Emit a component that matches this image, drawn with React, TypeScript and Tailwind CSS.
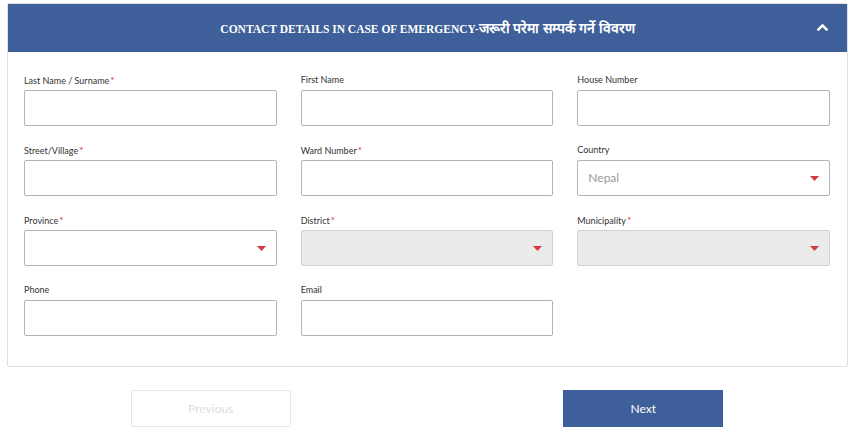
import { ChevronUp } from "lucide-react";

type Field = {
  label: string;
  required?: boolean;
  kind?: "text" | "select";
  disabled?: boolean;
  value?: string;
};

const rows: (Field | null)[][] = [
  [
    { label: "Last Name / Surname", required: true },
    { label: "First Name" },
    { label: "House Number" },
  ],
  [
    { label: "Street/Village", required: true },
    { label: "Ward Number", required: true },
    { label: "Country", kind: "select", value: "Nepal" },
  ],
  [
    { label: "Province", required: true, kind: "select" },
    { label: "District", required: true, kind: "select", disabled: true },
    { label: "Municipality", required: true, kind: "select", disabled: true },
  ],
  [{ label: "Phone" }, { label: "Email" }, null],
];

function Caret() {
  return (
    <svg width="9" height="5" viewBox="0 0 9 5" className="shrink-0">
      <path d="M0 0h9L4.5 5z" fill="#d23a3e" />
    </svg>
  );
}

function FormField({ field }: { field: Field }) {
  return (
    <div className="flex flex-col">
      <label className="h-[14px] text-[9px] leading-[14px] text-[#333] font-['Lato',sans-serif]">
        {field.label}
        {field.required && <span className="ml-[1px] text-[10px] text-[#d2313a]">*</span>}
      </label>
      <div
        className={`mt-[3px] flex h-[36px] items-center justify-between rounded-[2px] border border-[#b4b4b4] px-[10px] ${
          field.disabled ? "bg-[#ebebeb] border-[#cfcfcf]" : "bg-white"
        }`}
      >
        <span className="text-[12px] text-[#999] font-['Lato',sans-serif]">{field.value ?? ""}</span>
        {field.kind === "select" && <Caret />}
      </div>
    </div>
  );
}

export default function App() {
  return (
    <div className="w-[855px] h-[448px] bg-white pt-[3px] font-['Lato',sans-serif]">
      <div className="mx-[7px] rounded-[2px] border border-[#e0e0e0] bg-white">
        <div className="relative flex h-[48px] items-center justify-center bg-[#3e5f99]">
          <h2 className="text-[11.5px] font-bold text-white font-['Liberation_Serif',serif]">
            CONTACT DETAILS IN CASE OF EMERGENCY-
            <span className="text-[14px]">जरूरी परेमा सम्पर्क गर्ने विवरण</span>
          </h2>
          <ChevronUp className="absolute right-[16px] top-[15px] text-white" size={17} strokeWidth={3.5} />
        </div>
        <div className="flex flex-col gap-[17px] pl-[16px] pr-[17px] pt-[21px] pb-[30px]">
          {rows.map((row, i) => (
            <div key={i} className="grid grid-cols-3 gap-x-[24px]">
              {row.map((f, j) => (f ? <FormField key={j} field={f} /> : <div key={j} />))}
            </div>
          ))}
        </div>
      </div>
      <div className="mt-[23px] grid grid-cols-2">
        <div className="flex justify-center pr-[6px]">
          <button className="h-[37px] w-[160px] rounded-[2px] border border-[#e6e6e6] bg-white text-[12px] text-[#dedede]">
            Previous
          </button>
        </div>
        <div className="flex justify-center pl-[4px]">
          <button className="h-[37px] w-[160px] bg-[#3e5f99] text-[12px] text-white">Next</button>
        </div>
      </div>
    </div>
  );
}
